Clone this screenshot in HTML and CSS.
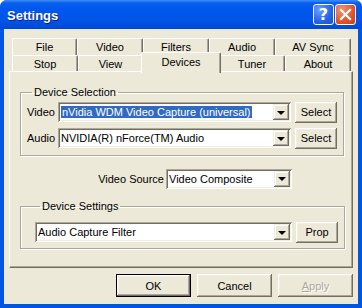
FILE: index.html
```html
<!DOCTYPE html>
<html lang="en">
<head>
    <meta charset="UTF-8">
    <title>Settings</title>
    <link rel="stylesheet" href="styles.css">
</head>
<body>

<div class="window">
    <div class="titlebar">
        <span class="title">Settings</span>
        <div class="caption-btns">
            <span class="cbtn help">?</span>
            <span class="cbtn close">
                <svg width="13" height="13" viewBox="0 0 13 13">
                    <path d="M2 2 L11 11 M11 2 L2 11" stroke="#fff" stroke-width="2.2" stroke-linecap="square"/>
                </svg>
            </span>
        </div>
    </div>

    <div class="client">
        <div class="tabs">
            <div class="tab-row">
                <div class="tab w65">File</div>
                <div class="tab w66">Video</div>
                <div class="tab w66">Filters</div>
                <div class="tab w66">Audio</div>
                <div class="tab w76">AV Sync</div>
            </div>
            <div class="tab-row">
                <div class="tab w66">Stop</div>
                <div class="tab w65">View</div>
                <div class="tab w76 selected">Devices</div>
                <div class="tab w66">Tuner</div>
                <div class="tab w66">About</div>
            </div>
        </div>

        <div class="panel">
            <fieldset class="group selection">
                <legend>Device Selection</legend>
                <div class="row">
                    <label class="row-label">Video</label>
                    <div class="combo wide">
                        <span class="value"><span class="highlight">nVidia WDM Video Capture (universal)</span></span>
                        <span class="drop"><span class="arrow"></span></span>
                    </div>
                    <button class="btn small">Select</button>
                </div>
                <div class="row">
                    <label class="row-label">Audio</label>
                    <div class="combo wide">
                        <span class="value">NVIDIA(R) nForce(TM) Audio</span>
                        <span class="drop"><span class="arrow"></span></span>
                    </div>
                    <button class="btn small">Select</button>
                </div>
            </fieldset>

            <div class="source-row">
                <label class="source-label">Video Source</label>
                <div class="combo source">
                    <span class="value">Video Composite</span>
                    <span class="drop"><span class="arrow"></span></span>
                </div>
            </div>

            <fieldset class="group settings">
                <legend>Device Settings</legend>
                <div class="row">
                    <div class="combo filter">
                        <span class="value">Audio Capture Filter</span>
                        <span class="drop"><span class="arrow"></span></span>
                    </div>
                    <button class="btn small">Prop</button>
                </div>
            </fieldset>
        </div>

        <div class="actions">
            <button class="btn default">OK</button>
            <button class="btn">Cancel</button>
            <button class="btn disabled"><u>A</u>pply</button>
        </div>
    </div>
</div>

</body>
</html>
```

FILE: styles.css
```css
/* page */
body {
    margin: 0;
    background: #ffffff;
    font-family: "Liberation Sans", Arial, sans-serif;
    font-size: 11px;
    color: #000;
}
.window {
    width: 362px;
    height: 308px;
    box-sizing: border-box;
    background: #0055e5;
    border-radius: 7px 7px 0 0;
    display: flex;
    flex-direction: column;
    overflow: hidden;
}

/* title bar */
.titlebar {
    height: 29px;
    flex: none;
    display: flex;
    align-items: center;
    justify-content: space-between;
    padding: 0 6px 0 7px;
    background: linear-gradient(#3d8cf8 0, #0a5fec 3px, #0058ee 8px, #0055e7 20px, #0048d8 29px);
}
.title {
    color: #fff;
    font-weight: bold;
    font-size: 13px;
    text-shadow: 1px 1px 0 #0a1e8a;
    margin-top: 1px;
}
.caption-btns {
    display: flex;
    gap: 1px;
}
.cbtn {
    width: 21px;
    height: 21px;
    box-sizing: border-box;
    border: 1px solid #fff;
    border-radius: 3px;
    display: flex;
    align-items: center;
    justify-content: center;
    color: #fff;
}
.help {
    background: radial-gradient(circle at 30% 25%, #6fa0ff, #2463e8 60%, #1d4fd0);
    font-family: "DejaVu Sans", sans-serif;
    font-weight: bold;
    font-size: 16px;
}
.close {
    background: radial-gradient(circle at 30% 25%, #f19374, #e1542a 60%, #c8401a);
}

/* client area */
.client {
    flex: 1;
    margin: 0 4px 4px 4px;
    background: #ece9d8;
    padding: 9px 5px 0 5px;
}

/* tabs */
.tabs {
    margin-left: 3px;
    display: flex;
    flex-direction: column;
}
.tab-row {
    display: flex;
    height: 17px;
}
.tab {
    box-sizing: border-box;
    height: 17px;
    border-top: 1px solid #fff;
    border-left: 1px solid #fff;
    border-right: 1px solid #716f64;
    border-radius: 2px 2px 0 0;
    box-shadow: inset -1px 0 0 #aca899;
    background: #ece9d8;
    text-align: center;
    line-height: 16px;
}
.w65 { width: 65px; }
.w66 { width: 66px; }
.w76 { width: 76px; }
.tab.selected {
    position: relative;
    z-index: 1;
    width: 80px;
    height: 21px;
    margin: -3px -2px 0 -2px;
    line-height: 18px;
}

/* panel */
.panel {
    position: relative;
    box-sizing: border-box;
    height: 197px;
    margin-top: -1px;
    border-top: 1px solid #fff;
    border-left: 1px solid #fff;
    border-right: 1px solid #716f64;
    border-bottom: 1px solid #716f64;
    box-shadow: inset -1px -1px 0 #aca899;
    padding: 0 9px 0 10px;
}

/* group boxes */
.group {
    margin: 14px 0 0 0;
    padding: 3px 6px 7px 6px;
    border: 1px solid #aca899;
    box-shadow: 1px 1px 0 #fff, inset 1px 1px 0 #fff;
    border-radius: 0;
}
.group legend {
    padding: 0 2px;
    margin-left: 5px;
    line-height: 13px;
}
.row {
    display: flex;
    align-items: center;
    height: 20px;
}
.row + .row {
    margin-top: 6px;
}
.row-label {
    width: 31px;
}
.row .btn.small {
    margin-left: 4px;
}
.settings {
    margin-top: 11px;
    padding: 9px 6px 6px 14px;
}

/* combo boxes */
.combo {
    box-sizing: border-box;
    height: 20px;
    background: #fff;
    box-shadow: inset 1px 1px 0 #aca899, inset -1px -1px 0 #fff, inset 2px 2px 0 #716f64, inset -2px -2px 0 #f1efe2;
    display: flex;
    align-items: center;
    padding: 2px;
}
.combo .value {
    flex: 1;
    padding-left: 1px;
    white-space: nowrap;
    overflow: hidden;
}
.highlight {
    background: #316ac5;
    color: #fff;
    padding: 1px 1px 2px 1px;
}
.drop {
    width: 16px;
    height: 16px;
    box-sizing: border-box;
    background: #ece9d8;
    box-shadow: inset -1px -1px 0 #716f64, inset 1px 1px 0 #f1efe2, inset -2px -2px 0 #aca899, inset 2px 2px 0 #fff;
    display: flex;
    align-items: center;
    justify-content: center;
}
.arrow {
    width: 0;
    height: 0;
    border-left: 4px solid transparent;
    border-right: 4px solid transparent;
    border-top: 4px solid #000;
    margin-top: 1px;
}
.wide { width: 233px; }
.source { width: 126px; }
.filter { width: 257px; }

.source-row {
    display: flex;
    align-items: center;
    justify-content: flex-end;
    margin-top: 12px;
    padding-right: 51px;
    gap: 2px;
    height: 21px;
}

/* buttons */
.btn {
    font-family: "Liberation Sans", Arial, sans-serif;
    font-size: 11px;
    color: #000;
    width: 75px;
    height: 23px;
    padding: 0;
    border: none;
    background: #ece9d8;
    box-shadow: inset -1px -1px 0 #716f64, inset 1px 1px 0 #fff, inset -2px -2px 0 #aca899, inset 2px 2px 0 #f1efe2;
}
.btn.small {
    width: 42px;
    height: 21px;
}
.btn.default {
    border: 1px solid #000;
}
.btn.disabled {
    color: #aca899;
    text-shadow: 1px 1px 0 #fff;
}
.actions {
    display: flex;
    justify-content: flex-end;
    gap: 6px;
    margin-top: 6px;
}
```
